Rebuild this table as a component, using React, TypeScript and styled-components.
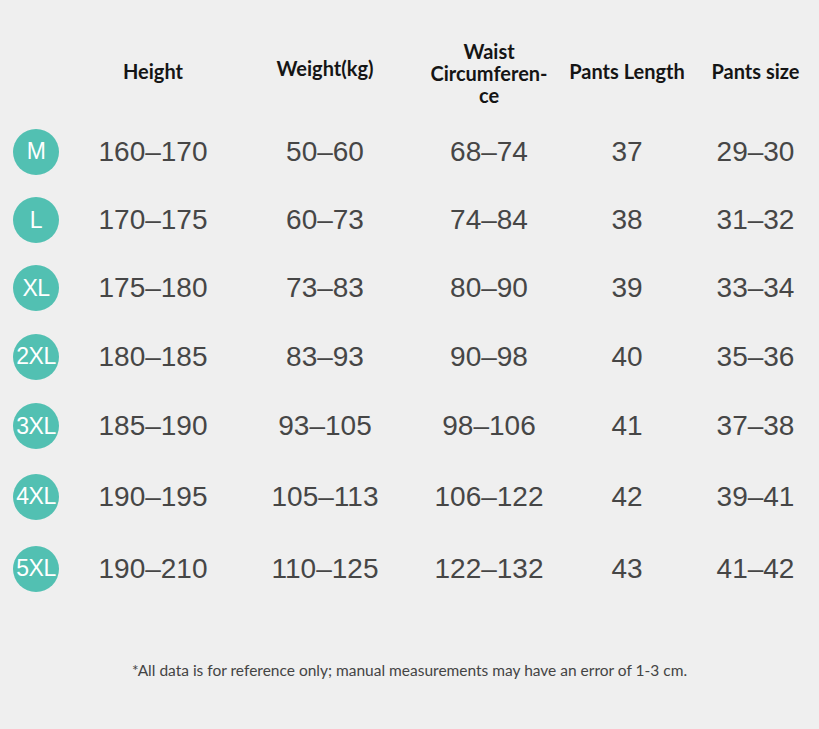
import React from "react";
import styled, { createGlobalStyle } from "styled-components";

const GlobalStyle = createGlobalStyle`
  html, body {
    margin: 0;
    padding: 0;
    background: #efefef;
  }
  body {
    width: 819px;
    height: 729px;
    overflow: hidden;
  }
`;

const Page = styled.div`
  width: 819px;
  height: 729px;
  padding-top: 40px;
  box-sizing: border-box;
  background: #efefef;
  display: flex;
  flex-direction: column;
`;

const Table = styled.div`
  display: grid;
  grid-template-columns: 72px 162px 182px 146px 130px 127px;
`;

// $shift moves a single-line header up by that many pixels
const HeaderCell = styled.div<{ $shift?: number }>`
  font-family: Lato, "Noto Sans", sans-serif;
  font-weight: 700;
  font-size: 20px;
  line-height: 22px;
  color: #151515;
  text-align: center;
  align-self: center;
  margin-bottom: ${(p) => (p.$shift ? p.$shift * 2 : 0)}px;
  padding-bottom: 11px;
`;

const Cell = styled.div<{ $height?: number }>`
  height: ${(p) => p.$height ?? 69}px;
  display: flex;
  align-items: center;
  justify-content: center;
  font-family: "Liberation Sans", Arial, sans-serif;
  font-size: 28px;
  color: #464646;
`;

const Badge = styled.div`
  width: 46px;
  height: 46px;
  border-radius: 50%;
  background: #52c0b2;
  color: #ffffff;
  display: flex;
  align-items: center;
  justify-content: center;
  font-family: "Liberation Sans", Arial, sans-serif;
  font-size: 23px;
  letter-spacing: -0.5px;
  white-space: nowrap;
`;

const Footer = styled.div`
  margin-top: 56px;
  text-align: center;
  font-family: Lato, "Noto Sans", sans-serif;
  font-size: 15.5px;
  color: #444444;
`;

const rows = [
  { size: "M", h: 69, values: ["160–170", "50–60", "68–74", "37", "29–30"] },
  { size: "L", h: 68, values: ["170–175", "60–73", "74–84", "38", "31–32"] },
  { size: "XL", h: 68, values: ["175–180", "73–83", "80–90", "39", "33–34"] },
  { size: "2XL", h: 69, values: ["180–185", "83–93", "90–98", "40", "35–36"] },
  { size: "3XL", h: 70, values: ["185–190", "93–105", "98–106", "41", "37–38"] },
  { size: "4XL", h: 71, values: ["190–195", "105–113", "106–122", "42", "39–41"] },
  { size: "5XL", h: 73, values: ["190–210", "110–125", "122–132", "43", "41–42"] },
];

const App = () => {
  return (
    <>
      <GlobalStyle />
      <Page>
        <Table>
          <div />
          <HeaderCell $shift={2}>Height</HeaderCell>
          <HeaderCell $shift={5}>Weight(kg)</HeaderCell>
          <HeaderCell>
            Waist
            <br />
            Circumferen-
            <br />
            ce
          </HeaderCell>
          <HeaderCell $shift={2}>Pants Length</HeaderCell>
          <HeaderCell $shift={2}>Pants size</HeaderCell>
          {rows.map((row) => (
            <React.Fragment key={row.size}>
              <Cell $height={row.h}>
                <Badge>{row.size}</Badge>
              </Cell>
              {row.values.map((value, i) => (
                <Cell key={i} $height={row.h}>
                  {value}
                </Cell>
              ))}
            </React.Fragment>
          ))}
        </Table>
        <Footer>
          *All data is for reference only; manual measurements may have an
          error of 1-3 cm.
        </Footer>
      </Page>
    </>
  );
};

export default App;
